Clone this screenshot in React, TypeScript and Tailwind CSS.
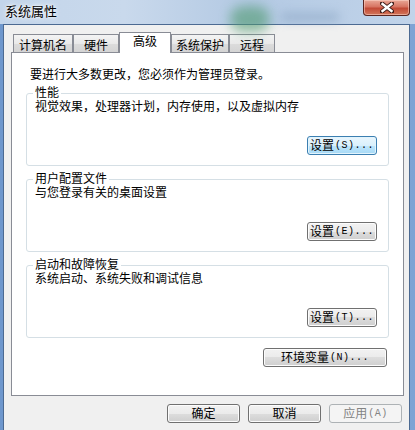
import React from "react";

const font = "font-['Liberation_Sans','Noto_Sans_CJK_SC','Noto_Sans_CJK_JP',sans-serif]";

type BtnKind = "normal" | "focus" | "disabled";

function WinButton({
  label,
  hint,
  width,
  kind = "normal",
}: {
  label: string;
  hint?: string;
  width: number;
  kind?: BtnKind;
}) {
  const look =
    kind === "focus"
      ? "border-[#3c7fb1] bg-[linear-gradient(#eaf6fd_0%,#d9f0fc_50%,#bee6fd_50%,#a7d9f5_100%)] shadow-[inset_0_0_0_1px_#e2f4fd] text-black"
      : kind === "disabled"
        ? "border-[#adb2b5] bg-[#f4f4f4] text-[#838383]"
        : "border-[#707070] bg-[linear-gradient(#f2f2f2_0%,#ebebeb_50%,#dddddd_50%,#cfcfcf_100%)] shadow-[inset_0_0_0_1px_#fcfcfc] text-black";

  return (
    <div
      className={`h-[19px] pt-px flex items-center justify-center rounded-[3px] border text-[12px] leading-[14px] ${look}`}
      style={{ width }}
    >
      <span>{label}</span>
      {hint && (
        <span className="font-['Liberation_Mono',monospace] text-[10px] tracking-[0.5px] ml-[1px]">
          {hint}
        </span>
      )}
    </div>
  );
}

// group box: the caption sits over the top border line
function Group({
  title,
  text,
  button,
}: {
  title: string;
  text: string;
  button: React.ReactNode;
}) {
  return (
    <div className="relative mx-[14px] border border-[#d5dfe5] rounded-[3px] pl-[8px] pr-[11px] pt-[7px] pb-[10px]">
      <span className="absolute -top-[7px] left-[6px] bg-white px-[2px] leading-[12px]">{title}</span>
      <p className="leading-[12px]">{text}</p>
      <div className="flex justify-end mt-[23px]">{button}</div>
    </div>
  );
}

function Tab({ label, width, active }: { label: string; width: number; active?: boolean }) {
  if (active) {
    return (
      <div
        className="h-[21px] -mb-px relative z-10 bg-white border border-b-0 border-[#898c95] flex justify-center pt-[2px] leading-[14px]"
        style={{ width }}
      >
        {label}
      </div>
    );
  }
  return (
    <div
      className="h-[18px] border border-b-0 border-[#898c95] bg-[linear-gradient(#f4f4f4,#e9e9e9_50%,#dcdcdc_50%,#d4d4d4)] flex justify-center pt-[4px] leading-[14px]"
      style={{ width }}
    >
      {label}
    </div>
  );
}

export default function App() {
  return (
    <div
      className={`w-[415px] h-[430px] overflow-hidden flex flex-col text-[12px] text-black bg-[linear-gradient(90deg,#6e97cd,#8fb0db_50%,#7ea3d4)] ${font}`}
    >
      {/* title bar */}
      <div className="h-[24px] relative flex items-start bg-[linear-gradient(90deg,#c3d5ea,#c9d9ec_30%,#b3c9e3_60%,#c1d4ea)]">
        <div className="absolute left-[230px] top-[6px] w-[40px] h-[26px] rounded-full bg-[#4f9a6f] opacity-60 blur-[6px]" />
        <div className="absolute left-[280px] top-[12px] w-[60px] h-[10px] rounded-full bg-[#8aa4c2] opacity-50 blur-[5px]" />
        <span className="relative ml-[5px] mt-[5px] text-[13px] leading-[14px] [text-shadow:0_0_6px_#fff,0_0_3px_#fff]">
          系统属性
        </span>
        <div className="absolute left-[363px] top-0 w-[47px] h-[16px] rounded-b-[4px] border border-t-0 border-[#5a2520] bg-[linear-gradient(#e9a897_0%,#d77462_45%,#c24a36_55%,#d2765a_100%)] shadow-[inset_0_0_0_1px_rgba(255,220,210,0.5)] flex items-center justify-center">
          <svg width="14" height="11" viewBox="0 0 14 11">
            <path d="M2 1.5 L12 9.5 M12 1.5 L2 9.5" stroke="#3a1a16" strokeWidth="4.2" strokeLinecap="square" />
            <path d="M2.5 2 L11.5 9 M11.5 2 L2.5 9" stroke="#ffffff" strokeWidth="2.4" strokeLinecap="square" />
          </svg>
        </div>
      </div>

      {/* body */}
      <div className="flex-1 ml-[3px] mr-[5px] border border-b-0 border-[#4c6a92] bg-[#f0f0f0] pt-[7px]">
        <div className="flex items-end ml-[9px]">
          <Tab label="计算机名" width={60} />
          <Tab label="硬件" width={46} />
          <Tab label="高级" width={52} active />
          <Tab label="系统保护" width={58} />
          <Tab label="远程" width={46} />
        </div>

        <div className="ml-[7px] mr-[5px] h-[344px] border border-[#898c95] bg-white pt-[15px]">
          <p className="ml-[18px] leading-[14px]">要进行大多数更改，您必须作为管理员登录。</p>

          <div className="mt-[11px] flex flex-col gap-[13px]">
            <Group
              title="性能"
              text="视觉效果，处理器计划，内存使用，以及虚拟内存"
              button={<WinButton label="设置" hint="(S)..." width={70} kind="focus" />}
            />
            <Group
              title="用户配置文件"
              text="与您登录有关的桌面设置"
              button={<WinButton label="设置" hint="(E)..." width={70} />}
            />
            <Group
              title="启动和故障恢复"
              text="系统启动、系统失败和调试信息"
              button={<WinButton label="设置" hint="(T)..." width={70} />}
            />
          </div>

          <div className="flex justify-end pr-[16px] mt-[10px]">
            <WinButton label="环境变量" hint="(N)..." width={124} />
          </div>
        </div>

        <div className="flex justify-end gap-[8px] mt-[8px] pr-[7px] relative">
          <WinButton label="确定" width={73} />
          <WinButton label="取消" width={73} />
          <WinButton label="应用" hint="(A)" width={73} kind="disabled" />
        </div>
      </div>
    </div>
  );
}
